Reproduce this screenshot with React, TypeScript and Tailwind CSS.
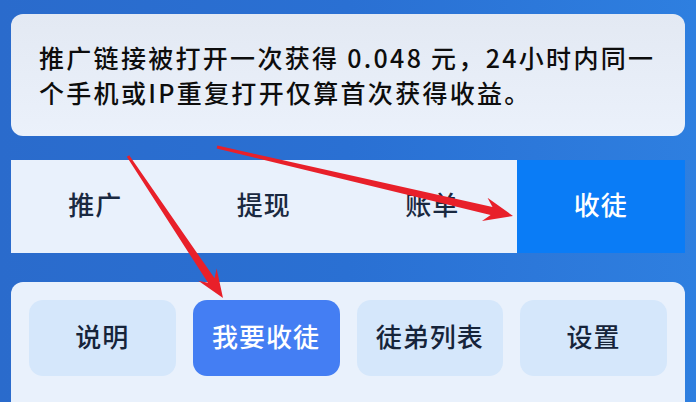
import React from "react";

type Pt = [number, number];

// tapered annotation arrow, built as one polygon
function arrowPoints(start: Pt, tip: Pt, headLen: number, headHalf: number, w0: number, w1: number) {
  const dx = tip[0] - start[0];
  const dy = tip[1] - start[1];
  const len = Math.hypot(dx, dy);
  const d: Pt = [dx / len, dy / len];
  const n: Pt = [-d[1], d[0]];
  const base: Pt = [tip[0] - d[0] * headLen, tip[1] - d[1] * headLen];
  const at = (p: Pt, along: number, side: number): Pt => [
    p[0] + d[0] * along + n[0] * side,
    p[1] + d[1] * along + n[1] * side,
  ];
  const pts: Pt[] = [
    at(start, 0, w0),
    at(base, 4, w1),
    at(base, -3, headHalf),
    tip,
    at(base, -3, -headHalf),
    at(base, 4, -w1),
    at(start, 0, -w0),
  ];
  return pts.map((p) => `${p[0].toFixed(1)},${p[1].toFixed(1)}`).join(" ");
}

const tabs = ["推广", "提现", "账单", "收徒"];
const actions = ["说明", "我要收徒", "徒弟列表", "设置"];

export default function App() {
  return (
    <div
      className="relative w-[696px] h-[402px] overflow-hidden bg-gradient-to-r from-[#2a6bcc] via-[#2a70d3] to-[#2e7fe0] px-[11px] pt-[14px] flex flex-col"
      style={{ fontFamily: '"Noto Sans CJK SC", "Noto Sans", sans-serif' }}
    >
      <div className="h-[122px] shrink-0 rounded-[12px] bg-gradient-to-b from-[#e3e9f3] to-[#ebf1fb] flex items-center pl-[28px] pr-[14px]">
        <p className="text-[25px] leading-[35px] tracking-[2.3px] font-medium text-[#0d0d0d]">
          推广链接被打开一次获得 0.048 元，24小时内同一个手机或IP重复打开仅算首次获得收益。
        </p>
      </div>

      <div className="mt-[24px] h-[93px] shrink-0 grid grid-cols-4 bg-[#e9f1fc]">
        {tabs.map((t, i) => (
          <div
            key={t}
            className={
              i === 3
                ? "flex items-center justify-center pb-[6px] bg-[#0a7cf6] text-white text-[26px] tracking-[1px] font-medium"
                : "flex items-center justify-center pb-[6px] text-[#1a2940] text-[26px] tracking-[1px] font-medium"
            }
          >
            {t}
          </div>
        ))}
      </div>

      <div className="mt-[29px] flex-1 rounded-t-[12px] bg-[#e9f1fc] px-[18px] pt-[18px]">
        <div className="grid grid-cols-4 gap-[17px]">
          {actions.map((a, i) => (
            <div
              key={a}
              className={
                i === 1
                  ? "h-[76px] rounded-[14px] bg-[#447ef3] text-white flex items-center justify-center pb-[6px] text-[26px] tracking-[1px] font-medium"
                  : "h-[76px] rounded-[14px] bg-[#d5e7fb] text-[#16243a] flex items-center justify-center pb-[6px] text-[26px] tracking-[1px] font-medium"
              }
            >
              {a}
            </div>
          ))}
        </div>
      </div>

      <svg className="absolute inset-0 pointer-events-none" width="696" height="402" viewBox="0 0 696 402">
        <polygon points={arrowPoints([128, 156], [223, 298], 25, 11, 1.4, 4)} fill="#e8202a" />
        <polygon points={arrowPoints([217, 147], [513, 216], 26, 12, 1.4, 4.2)} fill="#e8202a" />
      </svg>
    </div>
  );
}
